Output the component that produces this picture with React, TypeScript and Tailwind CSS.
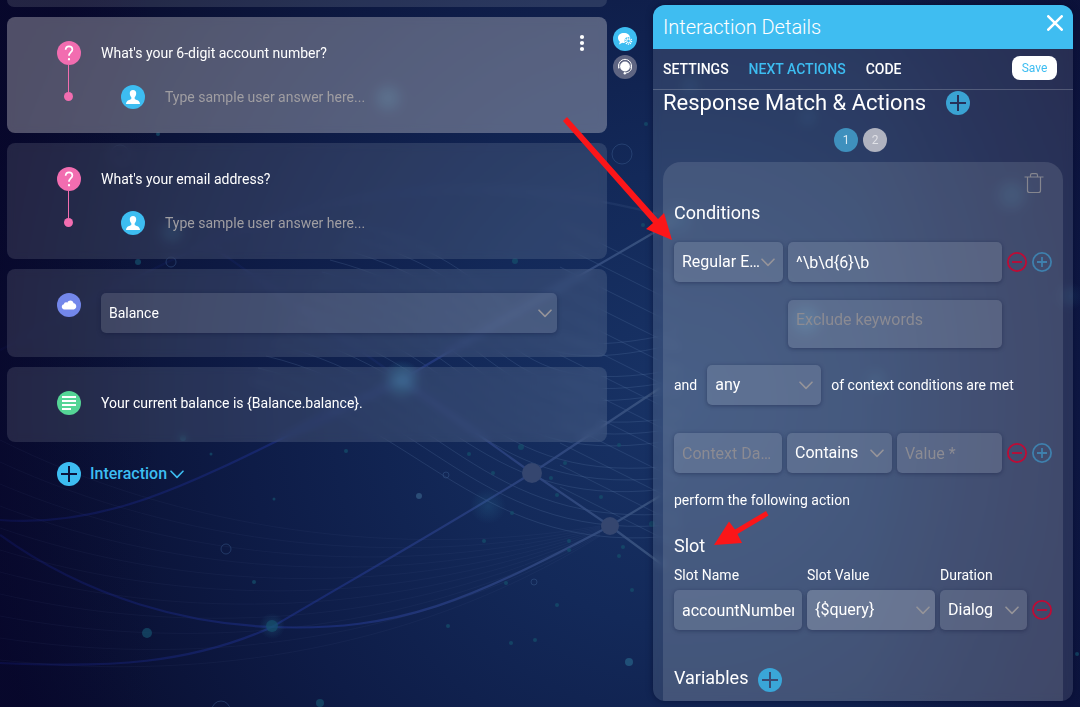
import React, { useState } from "react";

const field =
  "h-10 rounded-[5px] bg-white/12 px-2 text-base text-white shadow-[0_1px_4px_rgba(10,15,50,0.35)] outline-none placeholder:text-[#8b8b93] placeholder:opacity-100";

function Chevron({ className = "" }: { className?: string }) {
  return (
    <svg viewBox="0 0 14 9" className={className} fill="none" stroke="currentColor" strokeWidth="1.6" aria-hidden="true">
      <path d="M1 1.2 L7 7.4 L13 1.2" strokeLinecap="round" strokeLinejoin="round" />
    </svg>
  );
}

type SelectProps = {
  label: string;
  options: string[];
  className: string;
  tone?: string;
  chevron?: string;
};

function SelectBox({ label, options, className, tone = "bg-white/12 text-base pr-7", chevron = "right-2" }: SelectProps) {
  return (
    <div className={`relative ${className}`}>
      <select
        aria-label={label}
        className={`h-10 w-full appearance-none truncate rounded-[5px] pl-2 text-white shadow-[0_1px_4px_rgba(10,15,50,0.35)] outline-none ${tone}`}
      >
        {options.map((o) => (
          <option key={o} className="bg-[#2b3a64]">
            {o}
          </option>
        ))}
      </select>
      <Chevron className={`pointer-events-none absolute top-4 h-[9px] w-[14px] text-[#96959a] ${chevron}`} />
    </div>
  );
}

function PlusDisc({ className, cross }: { className: string; cross: string }) {
  return (
    <svg viewBox="0 0 24 24" className={`size-6 shrink-0 ${className}`} aria-hidden="true">
      <circle cx="12" cy="12" r="12" fill="currentColor" />
      <path d="M12 4v16M4 12h16" className={cross} strokeWidth="2" />
    </svg>
  );
}

function RingButton({ kind, label }: { kind: "add" | "remove"; label: string }) {
  return (
    <button type="button" aria-label={label} className={kind === "add" ? "text-[#3f80ad]" : "text-[#c00b35]"}>
      <svg viewBox="0 0 20 20" className="size-5" fill="none" stroke="currentColor" strokeWidth="1.8" aria-hidden="true">
        <circle cx="10" cy="10" r="9.1" />
        <path d={kind === "add" ? "M5 10h10M10 5v10" : "M5 10h10"} />
      </svg>
    </button>
  );
}

function QuestionCard({ text, active = false }: { text: string; active?: boolean }) {
  return (
    <section
      className={`relative flex h-[116px] gap-5 rounded-lg pt-6 pr-[50px] pl-[50px] backdrop-blur-xs ${active ? "bg-[#f4f3f2]/31" : "bg-[#f1f3f8]/12"}`}
    >
      <div className="flex w-6 shrink-0 flex-col items-start">
        <span className="flex size-6 items-center justify-center rounded-full bg-[#f26db0]">
          <svg viewBox="0 0 12 18" className="h-4 w-3" fill="none" stroke="white" aria-hidden="true">
            <path d="M2.2 5.400C2.300 3 3.700 1.500 6 1.500C8.400 1.500 9.800 3 9.800 5C9.800 8 6 8.300 6 12.200" strokeWidth="1.900" />
            <circle cx="6" cy="16" r="1.300" fill="white" stroke="none" />
          </svg>
        </span>
        <span className="ml-[11px] h-[27px] w-px bg-[#f26db0]" />
        <span className="ml-[7px] size-[9px] rounded-full bg-[#f26db0]" />
      </div>
      <div className="flex min-w-0 flex-1 flex-col gap-5">
        <p className="h-6 text-sm leading-6">{text}</p>
        <label className="flex items-center gap-5 pl-5">
          <svg viewBox="0 0 24 24" className="size-6 shrink-0" role="img" aria-label="User">
            <circle cx="12" cy="12" r="12" fill="#3dbdf1" />
            <path
              d="M12 5C14.100 5 15.300 6.400 15.200 8.500C15.100 10.200 14.500 11.500 13.700 12.300V13.900C14.300 14.900 19 14.700 19 19H5C5 14.700 9.700 14.900 10.300 13.900V12.300C9.500 11.500 8.900 10.200 8.800 8.500C8.700 6.400 9.900 5 12 5Z"
              fill="white"
            />
          </svg>
          <input
            aria-label="Sample user answer"
            placeholder="Type sample user answer here..."
            className="h-6 w-full bg-transparent text-sm outline-none placeholder:text-[#a09ea2] placeholder:opacity-100"
          />
        </label>
      </div>
      {active && (
        <button type="button" aria-label="More options" className="absolute top-[17px] right-[22px]">
          <svg viewBox="0 0 6 18" className="h-[18px] w-[6px]" fill="white" aria-hidden="true">
            <circle cx="3" cy="3" r="2.1" />
            <circle cx="3" cy="9" r="2.1" />
            <circle cx="3" cy="15" r="2.1" />
          </svg>
        </button>
      )}
    </section>
  );
}

const specks: [number, number, number][] = [
  [147, 633, 5], [272, 626, 6], [320, 703, 4], [138, 262, 3], [515, 261, 3], [521, 447, 3], [469, 454, 2],
  [565, 463, 2], [493, 473, 2], [551, 478, 2], [601, 497, 2], [557, 495, 2], [619, 445, 2], [652, 524, 3],
  [484, 541, 2], [569, 541, 2], [569, 550, 2], [274, 499, 1.5], [254, 582, 2], [506, 583, 2], [557, 605, 2],
  [448, 626, 2], [511, 643, 2], [535, 640, 2], [632, 590, 2], [646, 124, 2], [643, 225, 2], [158, 134, 2],
  [211, 454, 1.5], [346, 451, 2], [183, 438, 3], [512, 513, 2], [619, 556, 2], [623, 547, 2], [1077, 654, 2],
];
const glows: [number, number, number, number][] = [
  [402, 380, 20, 0.75], [272, 626, 13, 0.4], [388, 98, 18, 0.45], [488, 506, 18, 0.3], [806, 320, 20, 0.45],
  [1012, 195, 20, 0.3], [808, 117, 12, 0.2], [678, 220, 20, 0.2], [172, 232, 16, 0.3], [690, 86, 12, 0.2],
  [876, 380, 14, 0.2], [1070, 296, 14, 0.25],
];

function Backdrop() {
  return (
    <svg
      viewBox="0 0 1080 707"
      preserveAspectRatio="xMidYMid slice"
      className="absolute inset-0 h-full w-full"
      fill="none"
      aria-hidden="true"
    >
      <defs>
        <radialGradient id="sky" gradientUnits="userSpaceOnUse" cx="0" cy="0" r="1" gradientTransform="translate(680 400) scale(720 760)">
          <stop offset="0" stopColor="#183366" />
          <stop offset="0.3" stopColor="#132959" />
          <stop offset="0.6" stopColor="#0e1c47" />
          <stop offset="0.85" stopColor="#0a1135" />
          <stop offset="1" stopColor="#07082b" />
        </radialGradient>
        <radialGradient id="glow">
          <stop offset="0" stopColor="#3ea6c8" stopOpacity="0.5" />
          <stop offset="0.45" stopColor="#3ea6c8" stopOpacity="0.28" />
          <stop offset="1" stopColor="#3ea6c8" stopOpacity="0" />
        </radialGradient>
        <linearGradient id="strand" gradientUnits="userSpaceOnUse" x1="0" y1="0" x2="660" y2="0">
          <stop offset="0" stopColor="#16208a" stopOpacity="0.25" />
          <stop offset="0.5" stopColor="#20348a" stopOpacity="0.6" />
          <stop offset="1" stopColor="#3c5680" stopOpacity="0.9" />
        </linearGradient>
        <linearGradient id="edge" x1="0" y1="0" x2="1" y2="0">
          <stop offset="0" stopColor="#08072c" stopOpacity="0.45" />
          <stop offset="1" stopColor="#08072c" stopOpacity="0" />
        </linearGradient>
        <linearGradient id="rim" x1="0" y1="0" x2="1" y2="0">
          <stop offset="0" stopColor="#0c0c38" stopOpacity="0" />
          <stop offset="1" stopColor="#0c0c38" stopOpacity="0.4" />
        </linearGradient>
      </defs>
      <rect width="1080" height="707" fill="url(#sky)" />
      <rect width="160" height="707" fill="url(#edge)" />
      <rect x="860" width="220" height="707" fill="url(#rim)" />
      <g stroke="#6f8fc0" strokeOpacity="0.06">
        {Array.from({ length: 11 }, (_, i) => (
          <path key={i} d={`M0 ${440 + i * 22} C180 ${530 + i * 15} 400 ${560 + i * 10} 600 ${526 + i}`} />
        ))}
      </g>
      <g stroke="#7797c4" strokeOpacity="0.18">
        {Array.from({ length: 14 }, (_, i) => (
          <path key={i} d={`M${250 + i * 8} ${380 - i * 12} C${420 + i * 10} ${420 - i * 11} 480 ${560 - i * 14} 680 ${535 - i * 16 + (i % 3) * 5}`} />
        ))}
        {Array.from({ length: 13 }, (_, i) => (
          <path key={`r${i}`} d={`M560 ${223 + i * 22} L680 ${283 + i * 22}`} />
        ))}
      </g>
      <g stroke="url(#strand)" strokeWidth="2.2">
        <path d="M0 535 C90 600 190 624 272 627 C400 632 470 600 610 526 L660 496" />
        <path d="M0 663 C110 668 190 664 272 627 C360 575 440 530 532 473 L660 388" />
        <path d="M0 520 C130 530 230 460 402 380 C500 320 560 288 672 222" />
        <path d="M402 380 L532 473 L610 526 L664 566" />
        <path d="M210 245 L402 380" strokeOpacity="0.3" />
        <path d="M0 350 C130 290 330 120 680 220" strokeOpacity="0.3" />
      </g>
      {glows.map(([x, y, r, o]) => (
        <circle key={`${x}-${y}`} cx={x} cy={y} r={r} fill="url(#glow)" fillOpacity={o} />
      ))}
      {specks.map(([x, y, r]) => (
        <circle key={`${x}-${y}`} cx={x} cy={y} r={r} fill="#15506c" fillOpacity="0.7" />
      ))}
      <circle cx="532" cy="473" r="10" fill="#35466f" />
      <circle cx="610" cy="526" r="9" fill="#35466f" />
      <circle cx="419" cy="496" r="3" fill="#2b4d77" />
      <circle cx="629" cy="662" r="4" fill="#205078" />
      <g stroke="#37578a" strokeOpacity="0.5">
        <circle cx="622" cy="154" r="10" />
        <circle cx="226" cy="549" r="5" />
        <circle cx="534" cy="582" r="3" />
        <circle cx="446" cy="475" r="3" />
        <circle cx="221" cy="710" r="9" />
        <circle cx="171" cy="262" r="5" />
        <circle cx="120" cy="154" r="9" strokeOpacity="0.3" />
      </g>
    </svg>
  );
}

function Pointers() {
  return (
    <svg
      viewBox="0 0 1080 707"
      preserveAspectRatio="xMidYMid slice"
      className="pointer-events-none absolute inset-0 h-full w-full"
      fill="#fb1619"
      aria-hidden="true"
    >
      <path d="M567 117 L658 219 L664 213 L672 240 L646 229 L653 223 L563 121 Z" />
      <path d="M766 511 L735 529.5 L729 521.5 L714 545 L742 543 L737.5 534 L768.5 515.5 Z" />
    </svg>
  );
}

const tabs = ["SETTINGS", "NEXT ACTIONS", "CODE"];

export default function App() {
  const [tab, setTab] = useState("NEXT ACTIONS");

  return (
    <div className="relative flex min-h-screen overflow-hidden bg-[#0b1236] px-[7px] pb-[6px] font-[Roboto,sans-serif] text-white">
      <Backdrop />

      <main className="relative flex min-w-0 flex-1 flex-col gap-[10px]">
        <div className="h-[7px] rounded-b-lg bg-[#f1f3f8]/12" />
        <QuestionCard text="What's your 6-digit account number?" active />
        <QuestionCard text="What's your email address?" />
        <section className="flex h-[88px] gap-5 rounded-lg bg-[#f1f3f8]/12 px-[50px] pt-6 backdrop-blur-xs">
          <svg viewBox="0 0 24 24" className="size-6 shrink-0" role="img" aria-label="Service">
            <circle cx="12" cy="12" r="12" fill="#7387ea" />
            <path
              d="M7.500 16.500C3.800 16.200 4.200 11.500 7 11.300C6.900 9.600 8.900 8.700 10.200 9.700C11.600 6.300 16.200 6.800 16.600 10.300C20.100 10.700 20.200 16.100 16.700 16.500Z"
              fill="white"
            />
          </svg>
          <SelectBox label="Service" options={["Balance"]} className="flex-1" tone="bg-white/12 text-sm pr-7" chevron="right-[5px]" />
        </section>
        <section className="flex h-[75px] gap-5 rounded-lg bg-[#f1f3f8]/12 px-[50px] pt-6 backdrop-blur-xs">
          <svg viewBox="0 0 24 24" className="size-6 shrink-0" role="img" aria-label="Message">
            <circle cx="12" cy="12" r="12" fill="#55d596" />
            <path d="M5 6h14M5 10h14M5 14h14M5 18h9" stroke="white" strokeWidth="2" />
          </svg>
          <p className="h-6 text-sm leading-6">Your current balance is {"{Balance.balance}"}.</p>
        </section>
        <button type="button" className="mt-[10px] ml-[50px] flex items-center gap-[9px] self-start text-[#3dbdf1]">
          <PlusDisc className="text-[#3dbdf1]" cross="stroke-[#0c143b]" />
          <span className="flex items-center gap-[3px] text-base leading-6 font-medium">
            Interaction
            <Chevron className="h-[9px] w-[14px]" />
          </span>
        </button>
      </main>

      <nav className="relative mr-4 ml-[6px] flex flex-col gap-1 pt-[27px]" aria-label="Interaction tools">
        <button type="button" aria-label="Automation" className="size-6">
          <svg viewBox="0 0 24 24" className="size-6" aria-hidden="true">
            <circle cx="12" cy="12" r="12" fill="#3dbdf1" />
            <path d="M5 11c0-3.200 2.600-5 6-5s6 1.800 6 5-2.600 5-6 5c-.6 0-1.200 0-1.700-.2L6 17.600l.9-2.900C5.700 13.800 5 12.500 5 11z" fill="white" />
            <circle cx="15.5" cy="14" r="4" fill="#3dbdf1" />
            <circle cx="15.5" cy="14" r="3.1" fill="none" stroke="white" strokeWidth="1.3" strokeDasharray="1.3 0.8" />
            <circle cx="15.5" cy="14" r="1.8" fill="none" stroke="white" strokeWidth="1" />
          </svg>
        </button>
        <button type="button" aria-label="Agent" className="size-6">
          <svg viewBox="0 0 24 24" className="size-6" fill="none" stroke="white" aria-hidden="true">
            <circle cx="12" cy="12" r="12" fill="#5f6582" stroke="none" />
            <circle cx="12" cy="11.5" r="4.9" fill="white" stroke="none" />
            <path d="M6 13a6.4 6.4 0 1 1 12 0M18.300 10v4c-.8 2-2.500 3.500-5.300 4M5.700 9.500v4" strokeWidth="1" />
            <circle cx="11.8" cy="18.200" r="1.2" fill="white" stroke="none" />
          </svg>
        </button>
      </nav>

      <aside className="relative mt-[5px] flex w-[420px] shrink-0 flex-col overflow-hidden rounded-xl bg-[#f1f3f8]/12 shadow-[0_0_6px_rgba(4,8,40,0.5)] backdrop-blur-xs">
        <header className="flex h-11 items-center justify-between bg-[#3fbdf1] pr-[10px] pl-[10px]">
          <h1 className="text-xl leading-6 font-light">Interaction Details</h1>
          <button type="button" aria-label="Close" className="-mt-2">
            <svg viewBox="0 0 16 16" className="size-4" stroke="white" strokeWidth="2.6" strokeLinecap="round" aria-hidden="true">
              <path d="M1.300 1.300 L14.700 14.700 M14.700 1.300 L1.300 14.700" />
            </svg>
          </button>
        </header>
        <div className="flex h-[41px] items-center gap-5 border-b border-white/20 pr-4 pl-[10px]">
          {tabs.map((t) => (
            <button
              key={t}
              type="button"
              onClick={() => setTab(t)}
              className={`text-sm leading-5 font-medium ${t === tab ? "text-[#3dbdf1]" : "text-white"}`}
            >
              {t}
            </button>
          ))}
          <button type="button" className="mb-[2px] ml-auto h-6 w-[45px] rounded-lg bg-white text-xs text-[#3dbdf1]">
            Save
          </button>
        </div>

        <div className="flex flex-1 flex-col px-[10px]">
          <div className="flex items-center gap-5">
            <h2 className="text-[22px] leading-[26px]">Response Match &amp; Actions</h2>
            <button type="button" aria-label="Add response match">
              <PlusDisc className="text-[#3aa3d3]" cross="stroke-[#26315a]" />
            </button>
          </div>
          <div className="mt-3 flex justify-center gap-[5px] pr-[5px]">
            <button type="button" className="size-6 rounded-full bg-[#3f90bd] text-xs text-white/80">
              1
            </button>
            <button type="button" className="size-6 rounded-full bg-[#b0b3c0] text-xs text-white/60">
              2
            </button>
          </div>

          <div className="mt-[10px] flex flex-1 flex-col rounded-t-[18px] bg-[#f1f3f8]/12 px-[11px] pt-[10px] pb-[9px]">
            <button type="button" aria-label="Delete response match" className="mr-2 self-end text-[#85868f]">
              <svg viewBox="0 0 20 22" className="h-[22px] w-5" fill="none" stroke="currentColor" strokeWidth="1.200" aria-hidden="true">
                <path d="M0.500 5h19M3.500 5v13.500q0 2 2 2h9q2 0 2-2v-13.500M6.500 5v-1.800q0-1.500 1.500-1.500h4q1.500 0 1.500 1.500v1.800" />
              </svg>
            </button>
            <h3 className="mt-[7px] text-lg leading-6">Conditions</h3>

            <div className="mt-[17px] flex items-center gap-[5px]">
              <SelectBox label="Match type" options={["Regular Expression"]} className="w-[109px]" tone="bg-white/12 text-base pr-[22px]" />
              <input aria-label="Pattern" defaultValue="^\b\d{6}\b" className={`min-w-0 flex-1 ${field}`} />
              <RingButton kind="remove" label="Remove condition" />
              <RingButton kind="add" label="Add condition" />
            </div>
            <textarea
              aria-label="Exclude keywords"
              placeholder="Exclude keywords"
              className="mt-[18px] mr-[50px] ml-[114px] h-12 resize-none rounded-[5px] bg-white/12 px-2 py-2 text-base leading-6 shadow-[0_1px_4px_rgba(10,15,50,0.35)] outline-none placeholder:text-[#8b8b93] placeholder:opacity-100"
            />
            <div className="mt-[17px] flex items-center gap-[10px] text-sm">
              <span>and</span>
              <SelectBox label="Context match" options={["any", "all"]} className="w-[114px]" />
              <span>of context conditions are met</span>
            </div>
            <div className="mt-7 flex items-center gap-[5px]">
              <input aria-label="Context data name" placeholder="Context Data Name *" className={`w-[108px] text-ellipsis ${field}`} />
              <SelectBox label="Comparison" options={["Contains", "Equals"]} className="w-[105px]" tone="bg-white/12 text-base pr-6" />
              <input aria-label="Context value" placeholder="Value *" className={`min-w-0 flex-1 ${field}`} />
              <RingButton kind="remove" label="Remove context condition" />
              <RingButton kind="add" label="Add context condition" />
            </div>
            <p className="mt-[17px] text-sm leading-5">perform the following action</p>

            <h3 className="mt-6 text-lg leading-6">Slot</h3>
            <div className="mt-[7px] flex items-end gap-[5px] text-sm leading-5">
              <div className="flex w-32 flex-col gap-[5px]">
                <label htmlFor="slot-name">Slot Name</label>
                <input id="slot-name" defaultValue="accountNumber" className={`w-full ${field}`} />
              </div>
              <div className="flex w-32 flex-col gap-[5px]">
                <span>Slot Value</span>
                <SelectBox label="Slot Value" options={["{$query}"]} className="w-full" tone="bg-white/20 text-base pr-7" chevron="right-[5px]" />
              </div>
              <div className="flex min-w-0 flex-1 flex-col gap-[5px]">
                <span>Duration</span>
                <SelectBox label="Duration" options={["Dialog", "Session"]} className="w-full" tone="bg-white/12 text-base pr-6" />
              </div>
              <div className="flex h-10 items-center">
                <RingButton kind="remove" label="Remove slot" />
              </div>
            </div>

            <div className="mt-[38px] flex items-start gap-[10px]">
              <h3 className="text-lg leading-5">Variables</h3>
              <button type="button" aria-label="Add variable">
                <PlusDisc className="text-[#3aa6d8]" cross="stroke-[#3a4a72]" />
              </button>
            </div>
          </div>
        </div>
      </aside>

      <Pointers />
    </div>
  );
}
